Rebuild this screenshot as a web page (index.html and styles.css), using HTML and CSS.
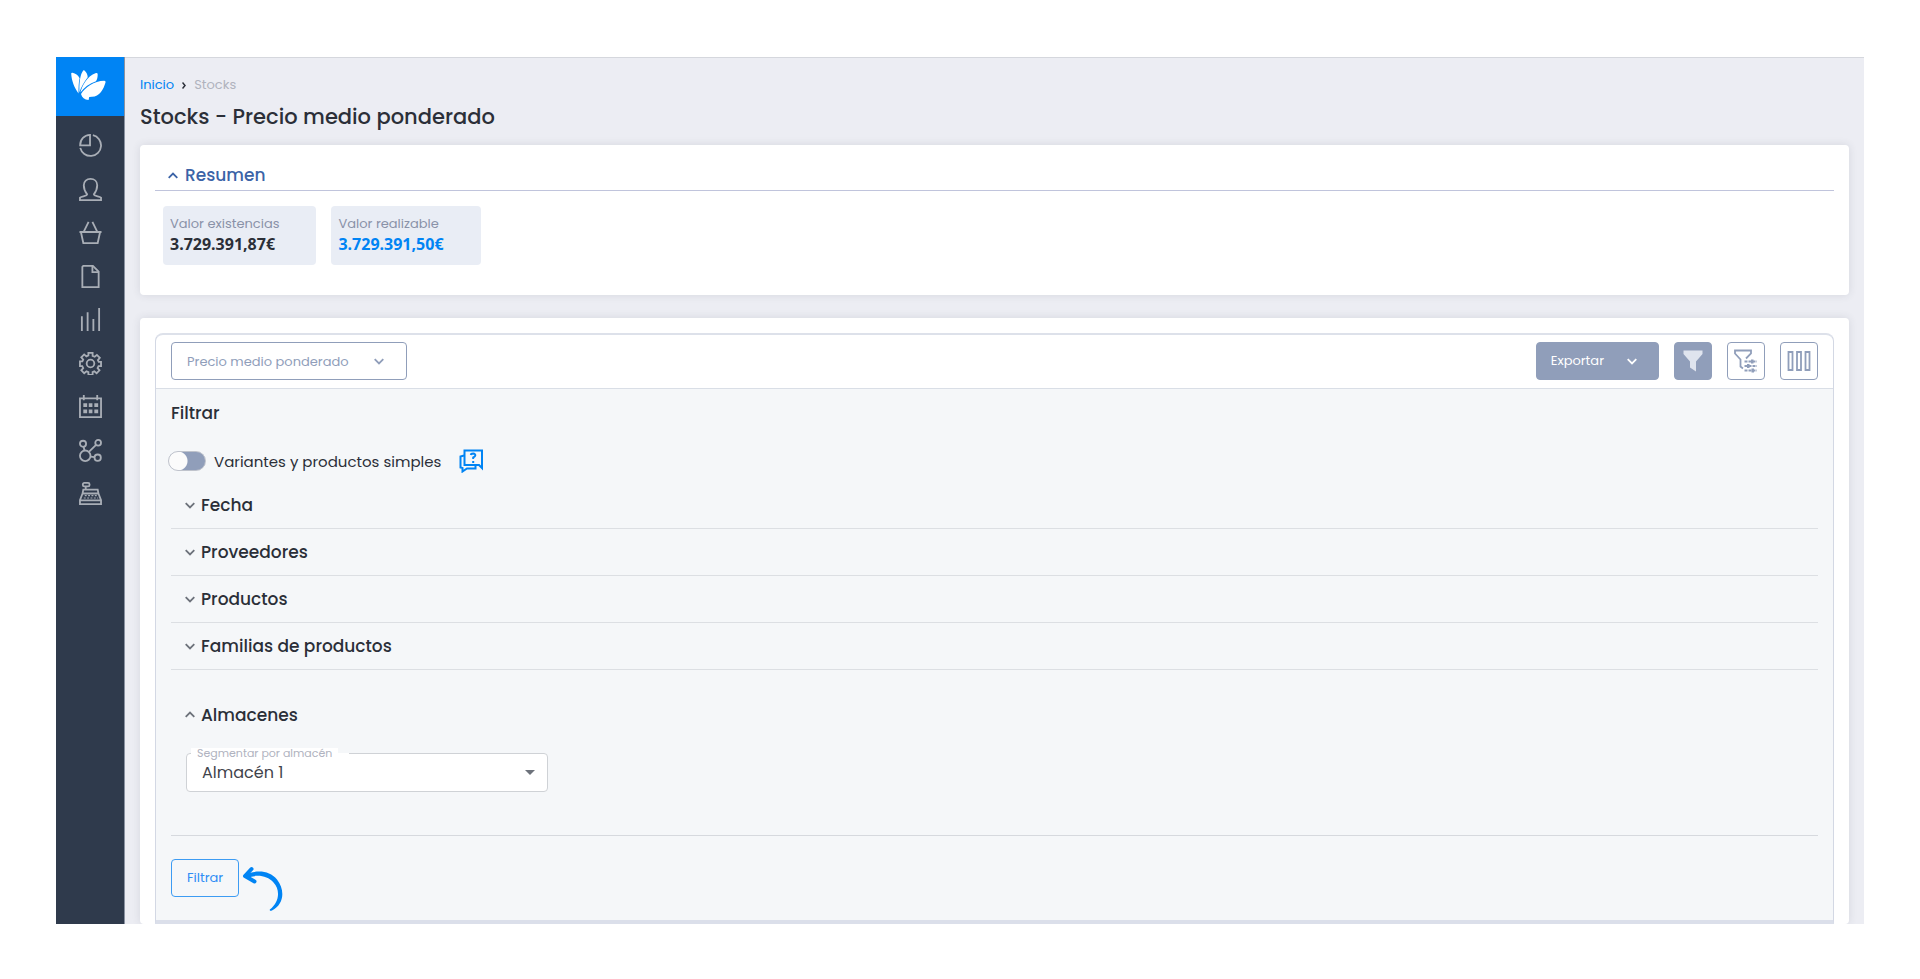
FILE: index.html
```html
<!DOCTYPE html>
<html lang="es">
<head>
  <meta charset="UTF-8">
  <meta name="viewport" content="width=device-width, initial-scale=1.0">
  <title>Stocks - Precio medio ponderado</title>
  <link rel="stylesheet" href="styles.css">
</head>
<body>

  <div class="app">

    <!-- Sidebar -->
    <aside class="sidebar">
      <a href="#" class="logo" aria-label="Inicio">
        <svg viewBox="0 0 35 30" width="35" height="30">
          <path d="M7.500 23.500C3.500 18 0.500 11 0.200 3.600Q0.300 2.500 1.500 2.800C4.500 3.500 7 5 8.600 8.200C7.700 12 7.500 17 7.500 23.500Z"/>
          <path d="M8.400 22.500C8.200 14 8.800 5 12.200 0.500Q12.800 -0.200 13.500 0.600C15.500 2.300 16.600 4.800 16.700 7.200C13 12 10 17 8.400 22.500Z"/>
          <path d="M9.400 22.500C11 16.500 15.500 6.500 25 3.100Q26.700 2.800 26.700 4.500C26.700 7 26.200 9.500 25 11.300C18.500 13.500 13 17.500 9.400 22.500Z"/>
          <path d="M10 24C14 17.500 23 11 33.300 10.800Q35 10.900 34.500 12.500C32.500 19.500 28.500 26.500 21 26.800L18.200 27L17.600 30C13.500 29.800 11 27.500 10 24Z"/>
        </svg>
      </a>
      <nav class="menu">
        <a href="#" aria-label="Panel">
          <svg viewBox="0 0 24 24"><path d="M11.500 11.800H1.200C1.200 5.500 5.500 1.200 11.500 1Z"/><path d="M14.500 1.200A11 11 0 1 1 1.300 14.500"/></svg>
        </a>
        <a href="#" aria-label="Clientes">
          <svg viewBox="0 0 24 24"><path d="M1 23V20.500C3 19 8.500 19 8.500 17C6.500 14.500 5 11.500 5 7.500C5 3.500 8 1 12 1S19 3.500 19 7.500C19 11.500 17.500 14.500 15.500 17C15.500 19 21 19 23 20.500V23Z"/></svg>
        </a>
        <a href="#" aria-label="Ventas">
          <svg viewBox="0 0 24 24"><path d="M0.500 11.500H23.500M2 11.500L4.500 23H19.500L22 11.500M5 11L10 1M19 11L14 1"/></svg>
        </a>
        <a href="#" aria-label="Documentos">
          <svg viewBox="0 0 24 24"><path d="M4.500 1H14.500L20.500 7V23H3.500V2Z"/><path d="M14 1V7.500H20.500"/></svg>
        </a>
        <a href="#" aria-label="Informes">
          <svg viewBox="0 0 24 24"><path d="M3 8.500V24M9 4.500V24M15 11.500V24M21 0V24"/></svg>
        </a>
        <a href="#" aria-label="Ajustes">
          <svg viewBox="0 0 24 24"><path d="M9.800 1h4.400v3l2.200 1 2.300-2 3 3-2 2.400.9 1.900H23v4.400h-2.600l-1 2 2 2.400-3 3-2.400-2-1.800.9v2.900H9.800v-2.900l-2-.9-2.400 2-3-3 2-2.400-1-2H1V9.800h2.500l.9-1.900-2-2.400 3-3 2.300 2 2.100-1Z"/><circle cx="12" cy="12" r="4"/></svg>
        </a>
        <a href="#" aria-label="Calendario">
          <svg viewBox="0 0 24 24"><path d="M1 3.500H23V23H1ZM5 0V5.500M19 0V5.500"/><path class="solid" d="M4.500 8.500H8.500V12.500H4.500ZM10.200 8.500H14V12.500H10.200ZM16 8.500H20V12.500H16ZM4.500 15H8.500V19H4.500ZM10.200 15H14V19H10.200ZM16 15H20V19H16Z"/></svg>
        </a>
        <a href="#" aria-label="Integraciones">
          <svg viewBox="0 0 24 24"><circle cx="4.200" cy="5" r="3.200"/><circle cx="20" cy="4" r="3"/><circle cx="6.500" cy="17.500" r="5.500"/><circle cx="19.500" cy="19.500" r="3.300"/><path d="M4.800 8L5.700 12M10.300 13.500L17.800 6.200M12 18.300L16.200 19"/></svg>
        </a>
        <a href="#" aria-label="TPV">
          <svg viewBox="0 0 24 24"><rect x="4" y="1" width="7" height="3.500" rx="1.500"/><path d="M7 4.500V8M4.500 8H19.500L20.300 12H3.700ZM3.700 12L1 19V23H23V19L20.300 12M1 19.200H23"/><path stroke-width="1.200" stroke-dasharray="2 1.500" d="M6 14.200H19M5 16.700H20"/></svg>
        </a>
      </nav>
    </aside>

    <!-- Main content -->
    <main class="content">
      <nav class="breadcrumb">
        <a href="#">Inicio</a>
        <svg width="4" height="7" viewBox="0 0 4 7"><path d="M0.500 0.500L3 3.500L0.500 6.500"/></svg>
        <span>Stocks</span>
      </nav>
      <h1>Stocks - Precio medio ponderado</h1>

      <!-- Resumen -->
      <section class="card summary">
        <button type="button" class="summary-toggle">
          <svg class="chevron" viewBox="0 0 10 7"><path d="M0.700 5.800L5 1.500L9.300 5.800"/></svg>
          Resumen
        </button>
        <div class="tiles">
          <div class="tile">
            <span class="tile-label">Valor existencias</span>
            <strong>3.729.391,87€</strong>
          </div>
          <div class="tile">
            <span class="tile-label">Valor realizable</span>
            <strong class="blue">3.729.391,50€</strong>
          </div>
        </div>
      </section>

      <!-- Listado -->
      <section class="card listing">
        <div class="panel">
          <div class="toolbar">
            <div class="view-select">
              <select aria-label="Vista">
                <option>Precio medio ponderado</option>
              </select>
              <svg class="chevron" viewBox="0 0 10 7"><path d="M0.700 1.200L5 5.500L9.300 1.200"/></svg>
            </div>
            <div class="actions">
              <button type="button" class="btn btn-export">
                Exportar
                <svg class="chevron" viewBox="0 0 10 7"><path d="M0.700 1.200L5 5.500L9.300 1.200"/></svg>
              </button>
              <button type="button" class="btn btn-icon btn-active" aria-label="Filtrar listado">
                <svg width="20" height="22" viewBox="0 0 20 22"><path class="funnel" d="M0.500 0.500H19.500V4L13 11.500V21.500L7 17.500V11.500L0.500 4Z"/></svg>
              </button>
              <button type="button" class="btn btn-icon" aria-label="Filtros guardados">
                <svg width="24" height="24" viewBox="0 0 24 24"><path d="M9 19.500L6.500 17.500V10.500L1 4.500V1.500H17V4.500L12 9.500"/><path d="M10.500 12.500H23M10.500 17H23M10.500 21.500H23" stroke-dasharray="3 1"/><path class="knob" d="M17 10.500H19.500V14.500H17ZM13 15H15.500V19H13ZM17.500 19.500H20V23.500H17.500Z"/></svg>
              </button>
              <button type="button" class="btn btn-icon" aria-label="Columnas">
                <svg width="24" height="20" viewBox="0 0 24 20"><path d="M1.500 1H5.500V19H1.500ZM10 1H14V19H10ZM18.500 1H22.500V19H18.500Z"/></svg>
              </button>
            </div>
          </div>

          <form class="filters">
            <h2>Filtrar</h2>
            <div class="switch-row">
              <input type="checkbox" id="variantes" class="switch">
              <label for="variantes">Variantes y productos simples</label>
              <button type="button" class="help" aria-label="Ayuda">
                <svg width="24" height="24" viewBox="0 0 24 24"><path d="M5.500 1.500H23V19L20 16H5.500Z"/><path d="M5 6.500L1.500 7.500V18.500L3.500 19V22.500L8 19.500H16.500V16"/><path d="M11.800 6Q12 4.500 14.200 4.500Q16.500 4.700 16.300 6.500Q16.200 7.500 14.200 8.500V10M14.200 12V14"/></svg>
              </button>
            </div>

            <button type="button" class="accordion"><svg class="chevron" viewBox="0 0 10 7"><path d="M0.700 1.200L5 5.500L9.300 1.200"/></svg>Fecha</button>
            <button type="button" class="accordion"><svg class="chevron" viewBox="0 0 10 7"><path d="M0.700 1.200L5 5.500L9.300 1.200"/></svg>Proveedores</button>
            <button type="button" class="accordion"><svg class="chevron" viewBox="0 0 10 7"><path d="M0.700 1.200L5 5.500L9.300 1.200"/></svg>Productos</button>
            <button type="button" class="accordion"><svg class="chevron" viewBox="0 0 10 7"><path d="M0.700 1.200L5 5.500L9.300 1.200"/></svg>Familias de productos</button>

            <div class="accordion-open">
              <button type="button" class="accordion"><svg class="chevron" viewBox="0 0 10 7"><path d="M0.700 5.800L5 1.500L9.300 5.800"/></svg>Almacenes</button>
              <div class="field">
                <label for="almacen">Segmentar por almacén</label>
                <select id="almacen">
                  <option>Almacén 1</option>
                </select>
                <span class="caret"></span>
              </div>
            </div>

            <div class="submit-row">
              <button type="submit" class="btn btn-submit">Filtrar</button>
              <svg class="arrow" width="42" height="46" viewBox="0 0 42 46">
                <path class="arrow-body" d="M5 8C16 3.500 28 5 35 13.500C43 23.500 42.500 38 30 44.500Q27.500 45.500 27.800 43.500C37.500 36 38.500 24 31.500 16.500C25 9.500 15 8 5 12Z"/>
                <path class="arrow-head" d="M9.500 3L3 10L12.500 15.500"/>
              </svg>
            </div>
          </form>
        </div>
      </section>
    </main>

  </div>

</body>
</html>
```
FILE: styles.css
```css
/* Global Styles */
* {
  box-sizing: border-box;
}

body {
  margin: 0;
  padding: 57px 56px 55px;
  background-color: #fff;
  color: #2b2f38;
  font-family: Poppins, Inter, sans-serif;
  font-size: 15px;
}

button,
select,
input {
  font-family: inherit;
}

button {
  cursor: pointer;
}

svg {
  display: block;
  fill: none;
  stroke: currentColor;
}

.app {
  display: flex;
  overflow: hidden;
  background-color: #ecedf3;
}

/* Sidebar */
.sidebar {
  flex: none;
  width: 69px;
  background-color: #2f3a4c;
  border-right: 1px solid #8a92a1;
}

.logo {
  display: flex;
  align-items: center;
  justify-content: center;
  height: 59px;
  padding: 0 4px 3px 0;
  background-color: #0084f4;
}

.logo svg {
  fill: #fff;
  stroke: none;
}

.menu {
  display: flex;
  flex-direction: column;
  align-items: center;
  justify-content: space-between;
  height: 389px;
  padding-top: 18px;
  color: #a9aeb6;
}

.menu a {
  color: inherit;
}

.menu svg {
  width: 23px;
  height: 23px;
  stroke-width: 1.9;
}

.menu .solid {
  fill: currentColor;
  stroke: none;
}

/* Main content */
.content {
  flex: 1;
  min-width: 0;
  padding: 18px 15px 0;
  border-top: 1px solid #d5d7dd;
}

.breadcrumb {
  display: flex;
  align-items: center;
  gap: 8px;
  font-size: 13px;
  line-height: 18px;
  color: #b0b3bd;
}

.breadcrumb a {
  color: #0084f4;
  text-decoration: none;
}

.breadcrumb svg {
  color: #2b2f38;
  stroke-width: 1.5;
}

h1 {
  margin: 8px 0 13px;
  font-size: 21px;
  line-height: 30px;
  font-weight: 500;
}

.card {
  background-color: #fff;
  border-radius: 4px;
  box-shadow: 0 0 8px rgba(47, 58, 76, 0.12);
}

.chevron {
  flex: none;
  width: 10px;
  height: 7px;
  stroke-width: 1.8;
}

/* Resumen */
.summary {
  padding: 17px 15px 30px;
}

.summary-toggle {
  display: flex;
  align-items: center;
  gap: 7px;
  width: 100%;
  padding: 0 13px 1px;
  border: 0;
  border-bottom: 1px solid #c0c4dc;
  background: none;
  color: #3b63a7;
  font-size: 17px;
  line-height: 27px;
  font-weight: 500;
}

.tiles {
  display: flex;
  gap: 15px;
  padding: 15px 8px 0;
}

.tile {
  padding: 8px 37px 10px 7px;
  border-radius: 4px;
  background-color: #e9edf5;
}

.tile-label {
  display: block;
  color: #8a92a8;
  font-size: 13px;
  line-height: 20px;
}

.tile strong {
  display: block;
  font-family: "Noto Sans", sans-serif;
  font-size: 16px;
  line-height: 21px;
}

.tile .blue {
  color: #0084f4;
}

/* Listado */
.listing {
  margin-top: 23px;
  padding: 15px 15px 0;
}

.panel {
  border: 1px solid #d3d8e4;
  border-top: 2px solid #dde1ea;
  border-bottom: 4px solid #dbdfea;
  border-radius: 8px 8px 0 0;
}

.toolbar {
  display: flex;
  justify-content: space-between;
  padding: 7px 15px 8px;
  border-bottom: 1px solid #d9dee6;
}

.view-select {
  position: relative;
  color: #909eba;
}

.view-select select {
  appearance: none;
  width: 236px;
  height: 38px;
  padding: 0 15px;
  border: 1px solid #909eba;
  border-radius: 4px;
  background-color: #fff;
  color: inherit;
  font-size: 13px;
}

.view-select .chevron {
  position: absolute;
  top: 16px;
  right: 23px;
  pointer-events: none;
}

.actions {
  display: flex;
  gap: 15px;
}

.btn {
  display: flex;
  align-items: center;
  justify-content: center;
  height: 38px;
  padding: 0 15px;
  border: 1px solid #909eba;
  border-radius: 4px;
  background-color: #fff;
  color: #909eba;
  font-size: 13px;
}

.btn-export {
  gap: 23px;
  padding: 0 21px 0 14px;
  background-color: #909eba;
  color: #fff;
}

.btn-icon {
  width: 38px;
  padding: 0;
}

.btn-icon svg {
  stroke-width: 1.8;
}

.btn-icon .knob {
  fill: currentColor;
  stroke: none;
}

.btn-active {
  background-color: #909eba;
}

.btn-icon .funnel {
  fill: #dfe4ee;
  stroke: none;
}

/* Filtros */
.filters {
  padding: 12px 15px 23px;
  background-color: #f5f7f9;
}

h2 {
  margin: 0;
  font-size: 17px;
  line-height: 24px;
  font-weight: 500;
}

.switch-row {
  display: flex;
  align-items: center;
  height: 24px;
  margin: 24px 0 9px;
}

.switch {
  appearance: none;
  width: 38px;
  height: 20px;
  margin: 0 8px 0 -3px;
  border: 1px solid #bfc3cc;
  border-radius: 10px;
  background: radial-gradient(circle at 9px 9px, #fbfbfb 9px, #909eba 10px);
}

.help {
  margin-left: 18px;
  padding: 0;
  border: 0;
  background: none;
  color: #0084f4;
}

.help svg {
  stroke-width: 2;
}

.accordion {
  display: flex;
  align-items: center;
  gap: 6px;
  width: 100%;
  height: 47px;
  padding: 0 14px;
  border: 0;
  border-bottom: 1px solid #dcdfe3;
  background: none;
  color: #2b2f38;
  font-size: 17px;
  font-weight: 500;
}

.accordion .chevron {
  color: #6d727b;
}

.accordion-open {
  padding: 21px 0 43px;
  border-bottom: 1px solid #d6d9de;
}

.accordion-open .accordion {
  border-bottom: 0;
}

.field {
  position: relative;
  width: 362px;
  max-width: 100%;
  margin: 15px 15px 0;
}

.field label {
  position: absolute;
  top: -5px;
  left: 5px;
  padding: 0 6px;
  background-color: #fff;
  color: #b0b3c0;
  font-size: 11px;
  line-height: 10px;
}

/* Gap in the border after the label */
.field label::after {
  content: "";
  position: absolute;
  top: 5px;
  left: 100%;
  width: 11px;
  height: 1px;
  background-color: #fff;
}

.field select {
  appearance: none;
  display: block;
  width: 100%;
  height: 39px;
  padding: 0 15px;
  border: 1px solid #cfd2d6;
  border-radius: 4px;
  background-color: #fff;
  color: #3f434b;
  font-size: 16px;
}

.caret {
  position: absolute;
  top: 17px;
  right: 13px;
  border: 5px solid transparent;
  border-top-color: #6d727b;
  border-bottom: 0;
  pointer-events: none;
}

.submit-row {
  display: flex;
  align-items: flex-start;
  gap: 3px;
  height: 61px;
  padding-top: 23px;
}

.btn-submit {
  border-color: #3d9cf3;
  background-color: transparent;
  color: #2f8df5;
}

.arrow {
  flex: none;
  margin-top: 7px;
}

.arrow-body {
  fill: #0084f4;
  stroke: none;
}

.arrow-head {
  stroke: #0084f4;
  stroke-width: 4;
  stroke-linecap: round;
  stroke-linejoin: round;
}
```
